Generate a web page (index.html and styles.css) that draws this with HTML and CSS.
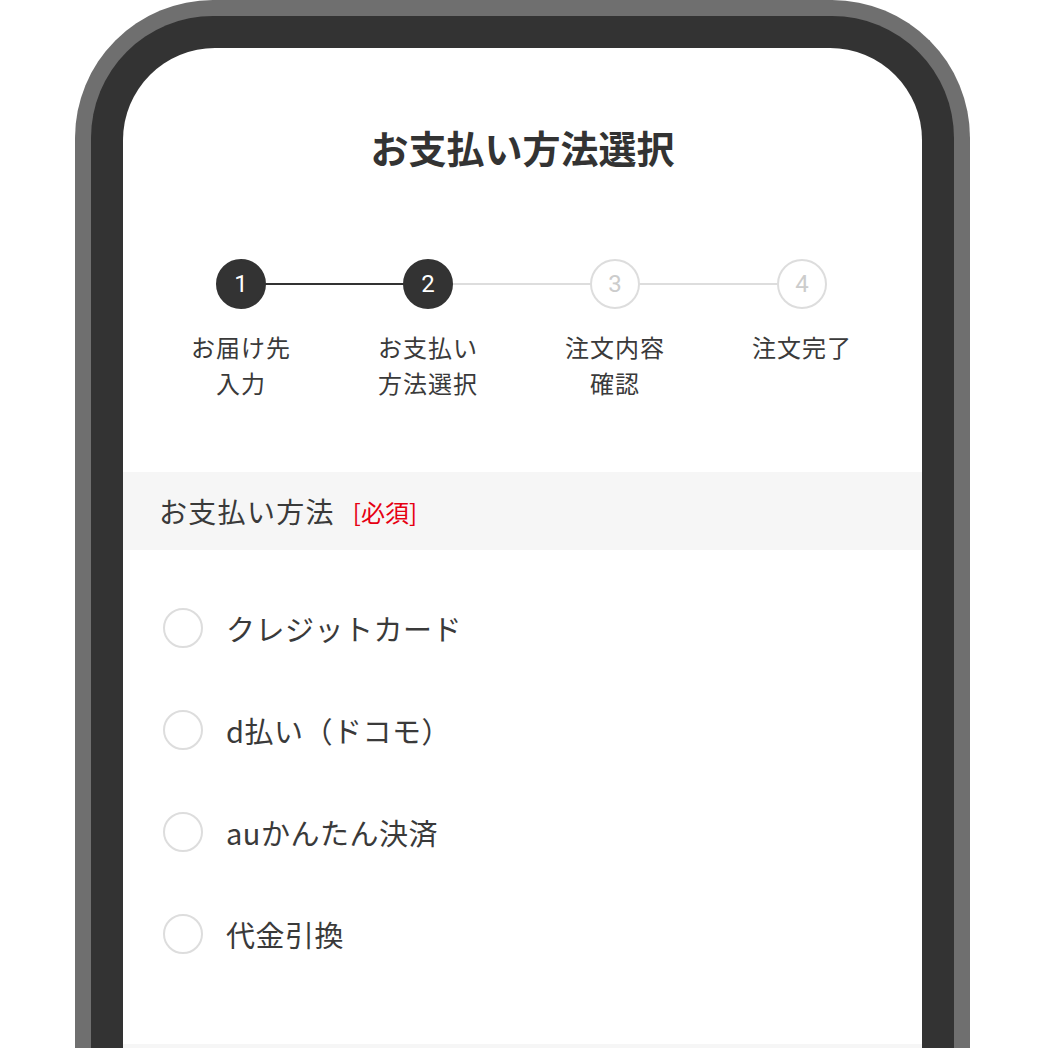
FILE: index.html
```html
<!DOCTYPE html>
<html lang="ja">
<head>
    <meta charset="UTF-8">
    <title>お支払い方法選択</title>
    <link rel="stylesheet" href="styles.css">
</head>
<body>
    <div class="phone">
        <div class="screen">
            <h1 class="page-title">お支払い方法選択</h1>

            <ol class="stepper">
                <li class="step done">
                    <span class="step-num">1</span>
                    <span class="step-label">お届け先<br>入力</span>
                </li>
                <li class="step active">
                    <span class="step-num">2</span>
                    <span class="step-label">お支払い<br>方法選択</span>
                </li>
                <li class="step">
                    <span class="step-num">3</span>
                    <span class="step-label">注文内容<br>確認</span>
                </li>
                <li class="step">
                    <span class="step-num">4</span>
                    <span class="step-label">注文完了</span>
                </li>
            </ol>

            <div class="section-head">
                お支払い方法<span class="required">[必須]</span>
            </div>

            <ul class="pay-list">
                <li class="pay-item"><span class="radio"></span>クレジットカード</li>
                <li class="pay-item"><span class="radio"></span>d払い（ドコモ）</li>
                <li class="pay-item"><span class="radio"></span>auかんたん決済</li>
                <li class="pay-item"><span class="radio"></span>代金引換</li>
            </ul>

            <div class="section-head next"></div>
        </div>
    </div>
</body>
</html>
```

FILE: styles.css
```css
* {
    margin: 0;
    padding: 0;
    box-sizing: border-box;
}

body {
    background: #fff;
    color: #333;
    font-family: 'Noto Sans CJK JP', 'Noto Sans', sans-serif;
    overflow: hidden;
}

.phone {
    width: 895px;
    margin-left: 75px;
    border: 16px solid #6f6f6f;
    border-bottom: none;
    border-radius: 138px 138px 0 0;
    background: #333;
    padding: 32px 32px 0;
}

.screen {
    background: #fff;
    border-radius: 92px 92px 0 0;
    min-height: 1100px;
    padding-top: 70px;
}

.page-title {
    text-align: center;
    font-size: 38px;
    line-height: 57px;
    font-weight: 700;
    color: #333;
}

/* stepper */
.stepper {
    list-style: none;
    display: grid;
    grid-template-columns: repeat(4, 187px);
    justify-content: center;
    margin-top: 84px;
    padding-right: 2px;
}

.step {
    position: relative;
    display: flex;
    flex-direction: column;
    align-items: center;
}

.step + .step::before {
    content: "";
    position: absolute;
    top: 24px;
    left: -50%;
    width: 100%;
    height: 2px;
    background: #ddd;
}

.step.active::before {
    background: #333;
}

.step-num {
    position: relative;
    z-index: 1;
    width: 50px;
    height: 50px;
    border-radius: 50%;
    border: 2px solid #ddd;
    background: #fff;
    color: #ccc;
    font-family: Roboto, 'Noto Sans', sans-serif;
    font-size: 24px;
    display: grid;
    place-items: center;
}

.step.done .step-num,
.step.active .step-num {
    background: #333;
    border-color: #333;
    color: #fff;
}

.step-label {
    margin-top: 20px;
    font-size: 24px;
    line-height: 36px;
    letter-spacing: 1px;
    text-align: center;
    color: #3a3a3a;
}

/* payment */
.section-head {
    margin-top: 71px;
    height: 78px;
    background: #f6f6f6;
    display: flex;
    align-items: center;
    padding-left: 36px;
    font-size: 28px;
    letter-spacing: 1.3px;
    color: #3a3a3a;
}

.section-head.next {
    margin-top: 0;
}

.required {
    margin-left: 18px;
    font-size: 24px;
    letter-spacing: 0;
    color: #e60012;
}

.pay-list {
    list-style: none;
    padding: 27px 0 59px 40px;
}

.pay-item {
    height: 102px;
    display: flex;
    align-items: center;
    gap: 23px;
    font-size: 29px;
    letter-spacing: 0.5px;
    color: #3a3a3a;
}

.radio {
    width: 40px;
    height: 40px;
    border-radius: 50%;
    border: 2px solid #ddd;
}
```
